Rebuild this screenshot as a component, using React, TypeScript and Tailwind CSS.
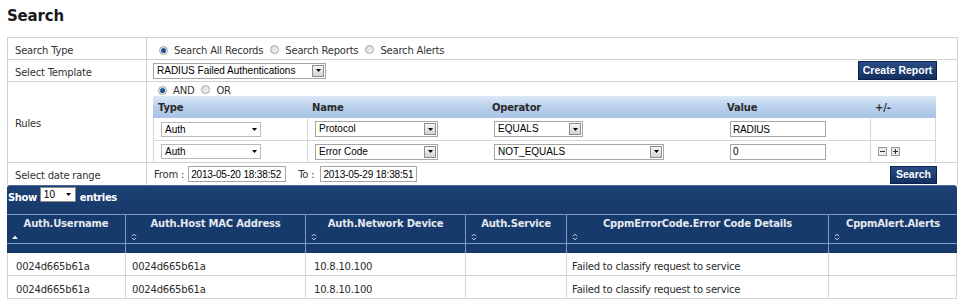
import React from "react";

const V = "font-['DejaVu_Sans',Verdana,sans-serif]";
const A = "font-['Liberation_Sans',Arial,sans-serif]";

function Radio({ checked }: { checked?: boolean }) {
  return (
    <span className="inline-flex shrink-0 w-[9px] h-[9px] rounded-full border border-[#a3a3a3] bg-gradient-to-br from-[#d9d9d9] to-[#f7f7f7] items-center justify-center">
      {checked && <span className="w-[5px] h-[5px] rounded-full bg-gradient-to-br from-[#2a6cb0] to-[#0d3a72]" />}
    </span>
  );
}

function Tri() {
  return (
    <svg width="5" height="3" viewBox="0 0 5 3">
      <path d="M0 0H5L2.5 3Z" fill="#000" />
    </svg>
  );
}

function BtnSelect({ className, text }: { className: string; text: string }) {
  return (
    <div className={`flex items-stretch border border-[#a5a5a5] bg-white ${className}`}>
      <span className={`flex-1 pl-[3px] ${A} text-[10px] leading-[14px] text-black tracking-normal whitespace-nowrap overflow-hidden`}>{text}</span>
      <span className="w-[12px] my-[1px] mr-[1px] border border-[#8d8d8d] bg-gradient-to-b from-[#f6f6f6] to-[#d4d4d4] flex items-center justify-center">
        <Tri />
      </span>
    </div>
  );
}

function PlainSelect({ text }: { text: string }) {
  return (
    <div className="flex items-center justify-between w-[100px] h-[15px] border border-[#b9b9b9] bg-white pl-[3px] pr-[3px]">
      <span className={`${A} text-[10px] text-black tracking-normal`}>{text}</span>
      <Tri />
    </div>
  );
}

function TextInput({ className, value }: { className: string; value: string }) {
  return (
    <div className={`flex items-center border border-[#a5a5a5] bg-white pl-[2px] ${A} text-[10px] text-black tracking-[-0.15px] whitespace-nowrap overflow-hidden ${className}`}>
      {value}
    </div>
  );
}

function NavyButton({ className, label }: { className: string; label: string }) {
  return (
    <div className={`flex items-center justify-center border border-[#0c2248] bg-gradient-to-b from-[#2b4d85] to-[#132f60] text-white font-bold ${A} text-[10.5px] tracking-normal ${className}`}>
      {label}
    </div>
  );
}

function SortBoth() {
  return (
    <svg width="6" height="8" viewBox="0 0 6 8">
      <path d="M1 3.2L3 1.2L5 3.2" stroke="#d6dde8" strokeWidth="1" fill="none" />
      <path d="M1 4.8L3 6.8L5 4.8" stroke="#d6dde8" strokeWidth="1" fill="none" />
    </svg>
  );
}

function SortUp() {
  return (
    <svg width="6" height="4" viewBox="0 0 6 4">
      <path d="M0 4L3 0.5L6 4Z" fill="#e6ebf2" />
    </svg>
  );
}

const cols = [
  { title: "Auth.Username", w: "w-[118px]", pl: "pl-[8px]", up: true },
  { title: "Auth.Host MAC Address", w: "w-[180px]", pl: "pl-[6px]" },
  { title: "Auth.Network Device", w: "w-[160px]", pl: "pl-[8px]" },
  { title: "Auth.Service", w: "w-[101px]", pl: "pl-[6px]" },
  { title: "CppmErrorCode.Error Code Details", w: "w-[262px]", pl: "pl-[5px]" },
  { title: "CppmAlert.Alerts", w: "w-[129px]", pl: "pl-[6px]" },
];

const rows = [
  ["0024d665b61a", "0024d665b61a", "10.8.10.100", "", "Failed to classify request to service", ""],
  ["0024d665b61a", "0024d665b61a", "10.8.10.100", "", "Failed to classify request to service", ""],
];

export default function App() {
  return (
    <div className={`w-[962px] h-[299px] bg-white overflow-hidden ${V} text-[10px] text-[#333] tracking-[-0.2px]`}>
      <div className="pl-[7px] pt-[7px] h-[37px]">
        <h1 className="text-[15px] leading-[18px] font-bold text-[#1a1a1a] tracking-[-0.2px]">Search</h1>
      </div>

      {/* Form table */}
      <div className="ml-[7px] w-[951px] border-x border-t border-[#d0d0d0]">
        {/* Search Type */}
        <div className="flex h-[22px] border-b border-[#d0d0d0]">
          <div className="w-[139px] border-r border-[#d0d0d0] pl-[7px] pt-[3px] flex items-center">Search Type</div>
          <div className="flex-1 flex items-center pl-[12px] pt-[3px]">
            <Radio checked />
            <span className="ml-[6px]">Search All Records</span>
            <span className="ml-[7px]"><Radio /></span>
            <span className="ml-[6px]">Search Reports</span>
            <span className="ml-[7px]"><Radio /></span>
            <span className="ml-[6px]">Search Alerts</span>
          </div>
        </div>
        {/* Select Template */}
        <div className="flex h-[22px] border-b border-[#d0d0d0]">
          <div className="w-[139px] border-r border-[#d0d0d0] pl-[7px] pt-[3px] flex items-center">Select Template</div>
          <div className="flex-1 flex items-center justify-between pl-[6px] pr-[20px]">
            <BtnSelect className="w-[173px] h-[16px]" text="RADIUS Failed Authentications" />
            <NavyButton className="w-[79px] h-[19px]" label="Create Report" />
          </div>
        </div>
        {/* Rules */}
        <div className="flex h-[81px] border-b border-[#d0d0d0]">
          <div className="w-[139px] border-r border-[#d0d0d0] pl-[7px] flex items-center pt-[3px]">Rules</div>
          <div className="flex-1 flex flex-col pl-[6px]">
            <div className="h-[14px] flex items-center pl-[5px] pt-[2px]">
              <Radio checked />
              <span className="ml-[6px]">AND</span>
              <span className="ml-[7px]"><Radio /></span>
              <span className="ml-[6px]">OR</span>
            </div>
            <div className="w-[783px] flex-1 flex flex-col">
              <div className="flex h-[22px] bg-gradient-to-b from-[#dde8f6] via-[#b9cfec] to-[#a9c3e6] font-bold text-[#2a2a2a] items-center pt-[1px]">
                <div className="w-[154px] pl-[5px]">Type</div>
                <div className="w-[180px] pl-[5px]">Name</div>
                <div className="w-[235px] pl-[5px]">Operator</div>
                <div className="w-[148px] pl-[5px]">Value</div>
                <div className="w-[66px] pl-[5px]">+/-</div>
              </div>
              <div className="flex h-[23px] border-x border-b border-[#d6d6d6]">
                <div className="w-[153px] flex items-center pl-[7px]"><PlainSelect text="Auth" /></div>
                <div className="w-[180px] border-l border-[#d6d6d6] flex items-center pl-[7px]">
                  <BtnSelect className="w-[123px] h-[16px]" text="Protocol" />
                </div>
                <div className="w-[235px] flex items-center pl-[7px]">
                  <BtnSelect className="w-[89px] h-[16px]" text="EQUALS" />
                </div>
                <div className="w-[148px] flex items-center pl-[8px]">
                  <TextInput className="w-[96px] h-[16px]" value="RADIUS" />
                </div>
                <div className="flex-1 border-l border-[#d6d6d6]" />
              </div>
              <div className="flex flex-1 border-x border-[#d6d6d6]">
                <div className="w-[153px] flex items-center pl-[7px]"><PlainSelect text="Auth" /></div>
                <div className="w-[180px] border-l border-[#d6d6d6] flex items-center pl-[7px]">
                  <BtnSelect className="w-[123px] h-[16px]" text="Error Code" />
                </div>
                <div className="w-[235px] flex items-center pl-[7px]">
                  <BtnSelect className="w-[170px] h-[16px]" text="NOT_EQUALS" />
                </div>
                <div className="w-[148px] flex items-center pl-[8px]">
                  <TextInput className="w-[96px] h-[16px]" value="0" />
                </div>
                <div className="flex-1 border-l border-[#d6d6d6] flex items-center pl-[7px] gap-[4px]">
                  <span className="w-[9px] h-[9px] border border-[#9a9a9a] bg-[#ececec] flex items-center justify-center">
                    <span className="w-[5px] h-[1px] bg-[#333]" />
                  </span>
                  <span className="relative w-[9px] h-[9px] border border-[#9a9a9a] bg-[#ececec] flex items-center justify-center">
                    <span className="w-[5px] h-[1px] bg-[#333]" />
                    <span className="absolute left-[3px] top-[1px] w-[1px] h-[5px] bg-[#333]" />
                  </span>
                </div>
              </div>
            </div>
          </div>
        </div>
        {/* Date range */}
        <div className="flex h-[22px]">
          <div className="w-[139px] border-r border-[#d0d0d0] pl-[7px] flex items-center pt-[3px]">Select date range</div>
          <div className="flex-1 flex items-center justify-between pl-[7px] pr-[20px]">
            <div className="flex items-center">
              <span className="pt-[1px]">From :</span>
              <TextInput className="ml-[4px] w-[98px] h-[16px]" value="2013-05-20 18:38:52" />
              <span className="ml-[12px] pt-[1px]">To :</span>
              <TextInput className="ml-[6px] w-[97px] h-[16px]" value="2013-05-29 18:38:51" />
            </div>
            <NavyButton className="w-[47px] h-[18px] mt-[2px]" label="Search" />
          </div>
        </div>
      </div>

      {/* Results */}
      <div className="ml-[7px] w-[950px]">
        <div className="h-[29px] rounded-t-[3px] bg-gradient-to-b from-[#1d4174] to-[#173a6b] border-t border-[#4a6a9a] flex items-start pt-[1px] pl-[1px] text-white font-bold tracking-[-0.4px]">
          <span className="mt-[3px]">Show</span>
          <div className="ml-[3px] w-[36px] h-[15px] bg-white border border-[#8a8a8a] flex items-center justify-between pl-[3px] pr-[4px] font-normal">
            <span className={`${A} text-[10px] text-black tracking-normal`}>10</span>
            <Tri />
          </div>
          <span className="ml-[4px] mt-[3px]">entries</span>
        </div>
        <div className="flex h-[29px] bg-[#163a6b] border-t border-[#7b9cca] text-[#e3e8ef] font-bold">
          {cols.map((c, i) => (
            <div key={i} className={`${c.w} ${i > 0 ? "border-l border-[#7b9cca]" : ""} flex flex-col`}>
              <div className="text-center leading-[12px] pt-[3px] whitespace-nowrap">{c.title}</div>
              <div className="pl-[5px] mt-[3px] h-[8px] flex items-center">{c.up ? <SortUp /> : <SortBoth />}</div>
            </div>
          ))}
        </div>
        <div className="flex h-[10px] bg-[#163a6b] border-t border-[#7b9cca]">
          {cols.map((c, i) => (
            <div key={i} className={`${c.w} ${i > 0 ? "border-l border-[#7b9cca]" : ""}`} />
          ))}
        </div>
        {rows.map((r, ri) => (
          <div key={ri} className="flex h-[23px] border-b border-x border-[#d4d4d4]">
            {r.map((t, ci) => (
              <div
                key={ci}
                className={`${ci === 0 ? "w-[117px]" : cols[ci].w} ${ci > 0 ? "border-l border-[#d4d4d4]" : ""} ${ci === 5 ? "flex-1" : ""} ${cols[ci].pl} pt-[4px] flex items-center text-[#2b2b2b] whitespace-nowrap`}
              >
                {t}
              </div>
            ))}
          </div>
        ))}
      </div>
    </div>
  );
}
